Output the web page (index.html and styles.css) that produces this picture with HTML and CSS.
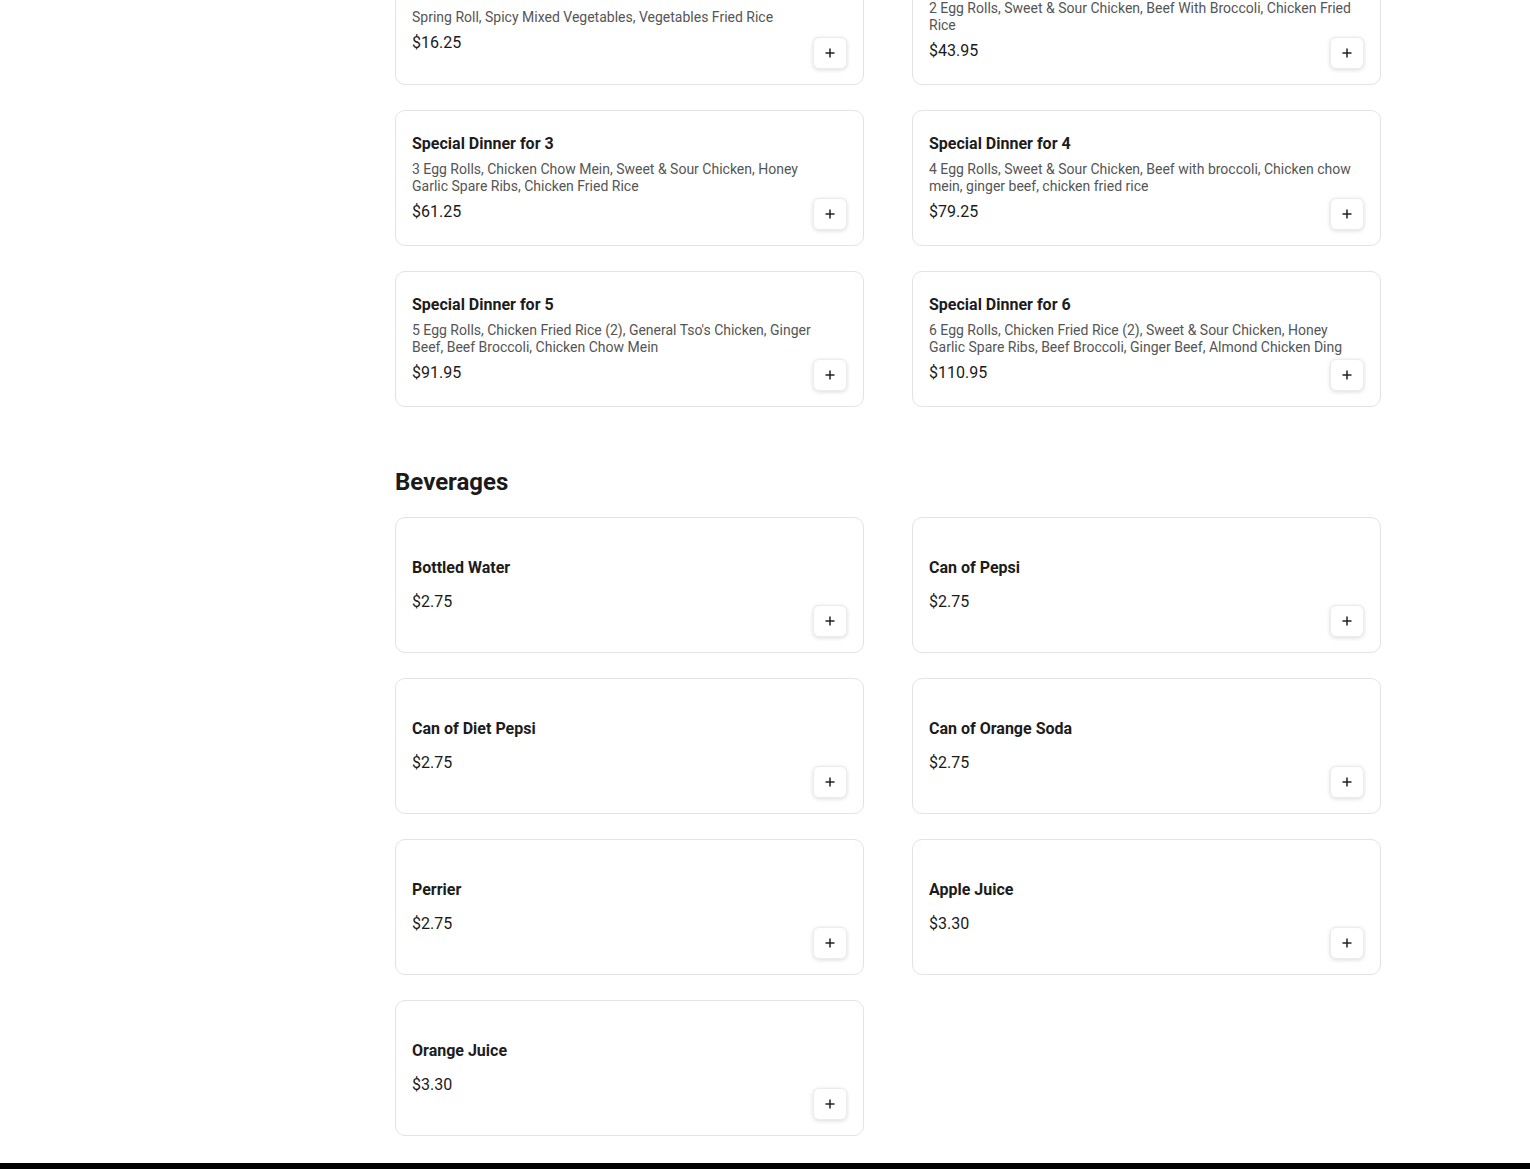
FILE: index.html
```html
<!DOCTYPE html>
<html lang="en">
<head>
<meta charset="utf-8">
<title>Menu</title>
<link rel="stylesheet" href="styles.css">
</head>
<body>
<main class="menu">
  <section class="section section--first">
    <div class="grid">
      <div class="card">
        <div class="info">
          <h3 class="name">Special Dinner for 1</h3>
          <p class="desc">Spring Roll, Spicy Mixed Vegetables, Vegetables Fried Rice</p>
          <p class="price">$16.25</p>
        </div>
        <button class="add" aria-label="Add"><svg viewBox="0 0 12 12" width="12" height="12"><path d="M6 1.5v9M1.5 6h9" stroke="#222" stroke-width="1.5" fill="none"/></svg></button>
      </div>
      <div class="card">
        <div class="info">
          <h3 class="name">Special Dinner for 2</h3>
          <p class="desc">2 Egg Rolls, Sweet &amp; Sour Chicken, Beef With Broccoli, Chicken Fried Rice</p>
          <p class="price">$43.95</p>
        </div>
        <button class="add" aria-label="Add"><svg viewBox="0 0 12 12" width="12" height="12"><path d="M6 1.5v9M1.5 6h9" stroke="#222" stroke-width="1.5" fill="none"/></svg></button>
      </div>
      <div class="card">
        <div class="info">
          <h3 class="name">Special Dinner for 3</h3>
          <p class="desc">3 Egg Rolls, Chicken Chow Mein, Sweet &amp; Sour Chicken, Honey Garlic Spare Ribs, Chicken Fried Rice</p>
          <p class="price">$61.25</p>
        </div>
        <button class="add" aria-label="Add"><svg viewBox="0 0 12 12" width="12" height="12"><path d="M6 1.5v9M1.5 6h9" stroke="#222" stroke-width="1.5" fill="none"/></svg></button>
      </div>
      <div class="card">
        <div class="info">
          <h3 class="name">Special Dinner for 4</h3>
          <p class="desc">4 Egg Rolls, Sweet &amp; Sour Chicken, Beef with broccoli, Chicken chow mein, ginger beef, chicken fried rice</p>
          <p class="price">$79.25</p>
        </div>
        <button class="add" aria-label="Add"><svg viewBox="0 0 12 12" width="12" height="12"><path d="M6 1.5v9M1.5 6h9" stroke="#222" stroke-width="1.5" fill="none"/></svg></button>
      </div>
      <div class="card">
        <div class="info">
          <h3 class="name">Special Dinner for 5</h3>
          <p class="desc">5 Egg Rolls, Chicken Fried Rice (2), General Tso's Chicken, Ginger Beef, Beef Broccoli, Chicken Chow Mein</p>
          <p class="price">$91.95</p>
        </div>
        <button class="add" aria-label="Add"><svg viewBox="0 0 12 12" width="12" height="12"><path d="M6 1.5v9M1.5 6h9" stroke="#222" stroke-width="1.5" fill="none"/></svg></button>
      </div>
      <div class="card">
        <div class="info">
          <h3 class="name">Special Dinner for 6</h3>
          <p class="desc">6 Egg Rolls, Chicken Fried Rice (2), Sweet &amp; Sour Chicken, Honey Garlic Spare Ribs, Beef Broccoli, Ginger Beef, Almond Chicken Ding</p>
          <p class="price">$110.95</p>
        </div>
        <button class="add" aria-label="Add"><svg viewBox="0 0 12 12" width="12" height="12"><path d="M6 1.5v9M1.5 6h9" stroke="#222" stroke-width="1.5" fill="none"/></svg></button>
      </div>
    </div>
  </section>

  <section class="section">
    <h2 class="section-title">Beverages</h2>
    <div class="grid">
      <div class="card">
        <div class="info">
          <h3 class="name">Bottled Water</h3>
          <p class="desc"></p>
          <p class="price">$2.75</p>
        </div>
        <button class="add" aria-label="Add"><svg viewBox="0 0 12 12" width="12" height="12"><path d="M6 1.5v9M1.5 6h9" stroke="#222" stroke-width="1.5" fill="none"/></svg></button>
      </div>
      <div class="card">
        <div class="info">
          <h3 class="name">Can of Pepsi</h3>
          <p class="desc"></p>
          <p class="price">$2.75</p>
        </div>
        <button class="add" aria-label="Add"><svg viewBox="0 0 12 12" width="12" height="12"><path d="M6 1.5v9M1.5 6h9" stroke="#222" stroke-width="1.5" fill="none"/></svg></button>
      </div>
      <div class="card">
        <div class="info">
          <h3 class="name">Can of Diet Pepsi</h3>
          <p class="desc"></p>
          <p class="price">$2.75</p>
        </div>
        <button class="add" aria-label="Add"><svg viewBox="0 0 12 12" width="12" height="12"><path d="M6 1.5v9M1.5 6h9" stroke="#222" stroke-width="1.5" fill="none"/></svg></button>
      </div>
      <div class="card">
        <div class="info">
          <h3 class="name">Can of Orange Soda</h3>
          <p class="desc"></p>
          <p class="price">$2.75</p>
        </div>
        <button class="add" aria-label="Add"><svg viewBox="0 0 12 12" width="12" height="12"><path d="M6 1.5v9M1.5 6h9" stroke="#222" stroke-width="1.5" fill="none"/></svg></button>
      </div>
      <div class="card">
        <div class="info">
          <h3 class="name">Perrier</h3>
          <p class="desc"></p>
          <p class="price">$2.75</p>
        </div>
        <button class="add" aria-label="Add"><svg viewBox="0 0 12 12" width="12" height="12"><path d="M6 1.5v9M1.5 6h9" stroke="#222" stroke-width="1.5" fill="none"/></svg></button>
      </div>
      <div class="card">
        <div class="info">
          <h3 class="name">Apple Juice</h3>
          <p class="desc"></p>
          <p class="price">$3.30</p>
        </div>
        <button class="add" aria-label="Add"><svg viewBox="0 0 12 12" width="12" height="12"><path d="M6 1.5v9M1.5 6h9" stroke="#222" stroke-width="1.5" fill="none"/></svg></button>
      </div>
      <div class="card">
        <div class="info">
          <h3 class="name">Orange Juice</h3>
          <p class="desc"></p>
          <p class="price">$3.30</p>
        </div>
        <button class="add" aria-label="Add"><svg viewBox="0 0 12 12" width="12" height="12"><path d="M6 1.5v9M1.5 6h9" stroke="#222" stroke-width="1.5" fill="none"/></svg></button>
      </div>
    </div>
  </section>
</main>
<footer class="footer"></footer>
</body>
</html>
```

FILE: styles.css
```css
* { box-sizing: border-box; }

html, body {
  margin: 0;
  padding: 0;
  background: #ffffff;
}

body {
  font-family: Roboto, "Liberation Sans", Arial, sans-serif;
  color: #1a1a1a;
  overflow: hidden;
}

.menu {
  width: 986px;
  margin: -51px 0 0 395px;
}

.section-title {
  margin: 0 0 19px;
  padding-top: 59px;
  font-size: 24px;
  line-height: 32px;
  font-weight: 700;
  color: #1a1a1a;
}

.grid {
  display: grid;
  grid-template-columns: 1fr 1fr;
  column-gap: 48px;
  row-gap: 25px;
}

.card {
  display: grid;
  grid-template-columns: 1fr;
  grid-template-rows: 1fr;
  height: 136px;
  padding: 15px 16px;
  border: 1px solid #e3e3e3;
  border-radius: 10px;
  background: #fff;
}

.info {
  grid-area: 1 / 1;
  align-self: center;
  display: flex;
  flex-direction: column;
  padding-right: 12px;
}

.name {
  margin: 0;
  font-size: 16px;
  line-height: 24px;
  font-weight: 700;
  color: #1c1c1c;
}

.desc {
  margin: 0;
  padding: 5px 0;
  font-size: 14px;
  line-height: 17px;
  color: #555;
}

.price {
  margin: 0;
  font-size: 16px;
  line-height: 24px;
  color: #1a1a1a;
}

.add {
  grid-area: 1 / 1;
  justify-self: end;
  align-self: end;
  width: 34px;
  height: 32px;
  padding: 0;
  display: flex;
  align-items: center;
  justify-content: center;
  background: #fff;
  border: 1px solid #ececec;
  border-radius: 6px;
  box-shadow: 0 1px 4px rgba(0, 0, 0, 0.14);
  cursor: pointer;
}

.add svg { display: block; }

.footer {
  margin-top: 27px;
  height: 40px;
  background: #000;
}
```
